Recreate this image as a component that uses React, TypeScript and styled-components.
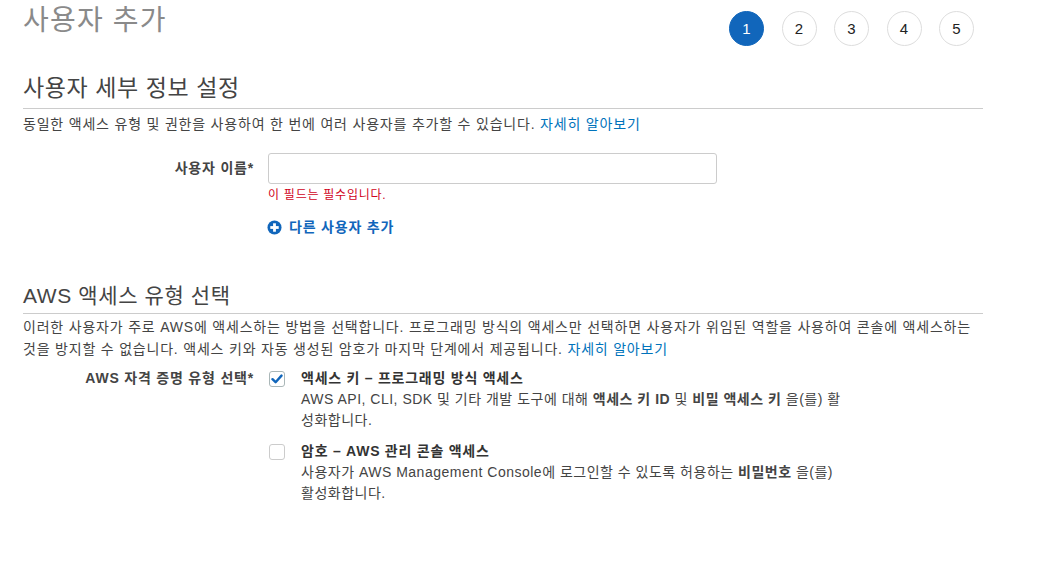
import { Fragment } from "react";
import styled, { createGlobalStyle } from "styled-components";

const GlobalStyle = createGlobalStyle`
  html, body {
    margin: 0;
    padding: 0;
    background: #fff;
  }
  body {
    font-family: "Liberation Sans", "Noto Sans CJK KR", Arial, sans-serif;
    font-size: 14px;
    color: #444;
  }
`;

// styled components
const Page = styled.div`
  width: 960px;
  margin-left: 23px;
`;

const Header = styled.header`
  display: flex;
  justify-content: space-between;
  align-items: flex-start;
  height: 58px;
`;

const Title = styled.h1`
  margin: 0;
  font-size: 28px;
  letter-spacing: 1.2px;
  line-height: 42px;
  font-weight: 400;
  color: #8a8a8a;
`;

const Steps = styled.ol`
  display: flex;
  gap: 17.5px;
  list-style: none;
  margin: 11px 9px 0 0;
  padding: 0;
`;

const Step = styled.li<{ $active?: boolean }>`
  width: 35px;
  height: 35px;
  box-sizing: border-box;
  border-radius: 50%;
  display: flex;
  align-items: center;
  justify-content: center;
  font-size: 15px;
  color: ${(p) => (p.$active ? "#fff" : "#222")};
  background: ${(p) => (p.$active ? "#1166bb" : "#fff")};
  border: 1px solid ${(p) => (p.$active ? "#1166bb" : "#ddd")};
`;

const SectionTitle = styled.h2<{ $size: number; $lh: number; $pb: number }>`
  margin: 0;
  font-size: ${(p) => p.$size}px;
  line-height: ${(p) => p.$lh}px;
  padding-bottom: ${(p) => p.$pb}px;
  letter-spacing: 0.6px;
  font-weight: 400;
  color: #444;
  border-bottom: 1px solid #ccc;
`;

const Section = styled.section<{ $mt: number }>`
  margin-top: ${(p) => p.$mt}px;
`;

const Description = styled.p<{ $lh: number; $mt: number }>`
  margin: ${(p) => p.$mt}px 0 0;
  line-height: ${(p) => p.$lh}px;
  letter-spacing: 0.8px;
  white-space: nowrap;
`;

const Link = styled.a`
  color: #0073bb;
  text-decoration: none;
`;

const FormGrid = styled.div<{ $mt: number }>`
  display: grid;
  grid-template-columns: 231px 1fr;
  column-gap: 14px;
  margin-top: ${(p) => p.$mt}px;
`;

const Label = styled.label<{ $pt: number }>`
  text-align: right;
  font-weight: 700;
  line-height: 21px;
  letter-spacing: 0.8px;
  padding-top: ${(p) => p.$pt}px;
  color: #444;
  white-space: nowrap;
`;

const Field = styled.div`
  display: flex;
  flex-direction: column;
  align-items: flex-start;
`;

const TextInput = styled.input`
  width: 449px;
  height: 31px;
  box-sizing: border-box;
  border: 1px solid #ccc;
  border-radius: 3px;
  padding: 0 8px;
  font: inherit;
  outline: none;
`;

const ErrorText = styled.div`
  margin-top: 3px;
  font-size: 12px;
  line-height: 16px;
  letter-spacing: 0.75px;
  color: #d0021b;
`;

const AddButton = styled.button`
  display: flex;
  align-items: center;
  gap: 7px;
  margin-top: 14px;
  margin-left: -1px;
  padding: 0;
  border: 0;
  background: none;
  font: inherit;
  line-height: 20px;
  letter-spacing: 0.8px;
  font-weight: 700;
  color: #1166bb;
  cursor: pointer;
`;

const OptionList = styled.div`
  display: flex;
  flex-direction: column;
  gap: 10px;
`;

const Option = styled.label`
  display: flex;
  align-items: flex-start;
  gap: 16px;
`;

const CheckBox = styled.span<{ $checked?: boolean }>`
  flex: none;
  width: 16px;
  height: 16px;
  box-sizing: border-box;
  margin: 3px 0 0 1px;
  border: 1px solid ${(p) => (p.$checked ? "#aab7b8" : "#ccc")};
  border-radius: 3px;
  background: #fff;
  display: flex;
  align-items: center;
  justify-content: center;
`;

const OptionBody = styled.div`
  line-height: 21px;
  letter-spacing: 0.5px;
  white-space: nowrap;
`;

const OptionTitle = styled.div`
  font-weight: 700;
  letter-spacing: 0.75px;
  color: #333;
`;

const PlusIcon = () => (
  <svg width="15" height="15" viewBox="0 0 16 16">
    <circle cx="8" cy="8" r="7.5" fill="#1166bb" />
    <rect x="3.5" y="6.5" width="9" height="3" fill="#fff" />
    <rect x="6.5" y="3.5" width="3" height="9" fill="#fff" />
  </svg>
);

const CheckIcon = () => (
  <svg width="12" height="10" viewBox="0 0 12 10">
    <path d="M1.5 5.2 L4.6 8.2 L10.5 1.6" fill="none" stroke="#1166bb" strokeWidth="2.4" strokeLinecap="round" strokeLinejoin="round" />
  </svg>
);

const steps = [1, 2, 3, 4, 5];

export default function App() {
  return (
    <Fragment>
      <GlobalStyle />
      <Page>
        <Header>
          <Title>사용자 추가</Title>
          <Steps>
            {steps.map((n) => (
              <Step key={n} $active={n === 1}>
                {n}
              </Step>
            ))}
          </Steps>
        </Header>

        {/* USER DETAILS */}
        <Section $mt={14}>
          <SectionTitle $size={23} $lh={32} $pb={4}>
            사용자 세부 정보 설정
          </SectionTitle>
          <Description $lh={20} $mt={5}>
            동일한 액세스 유형 및 권한을 사용하여 한 번에 여러 사용자를 추가할 수 있습니다.{" "}
            <Link href="#">자세히 알아보기</Link>
          </Description>

          <FormGrid $mt={19}>
            <Label $pt={5}>사용자 이름*</Label>
            <Field>
              <TextInput type="text" />
              <ErrorText>이 필드는 필수입니다.</ErrorText>
              <AddButton type="button">
                <PlusIcon />
                다른 사용자 추가
              </AddButton>
            </Field>
          </FormGrid>
        </Section>

        {/* ACCESS TYPE */}
        <Section $mt={45}>
          <SectionTitle $size={21} $lh={28} $pb={3}>
            AWS 액세스 유형 선택
          </SectionTitle>
          <Description $lh={22} $mt={2}>
            이러한 사용자가 주로 AWS에 액세스하는 방법을 선택합니다. 프로그래밍 방식의 액세스만 선택하면 사용자가 위임된 역할을 사용하여 콘솔에 액세스하는
            <br />
            것을 방지할 수 없습니다. 액세스 키와 자동 생성된 암호가 마지막 단계에서 제공됩니다. <Link href="#">자세히 알아보기</Link>
          </Description>

          <FormGrid $mt={8}>
            <Label $pt={0}>AWS 자격 증명 유형 선택*</Label>
            <OptionList>
              <Option>
                <CheckBox $checked>
                  <CheckIcon />
                </CheckBox>
                <OptionBody>
                  <OptionTitle>액세스 키 – 프로그래밍 방식 액세스</OptionTitle>
                  AWS API, CLI, SDK 및 기타 개발 도구에 대해 <b>액세스 키 ID</b> 및 <b>비밀 액세스 키</b> 을(를) 활
                  <br />
                  성화합니다.
                </OptionBody>
              </Option>
              <Option>
                <CheckBox />
                <OptionBody>
                  <OptionTitle>암호 – AWS 관리 콘솔 액세스</OptionTitle>
                  사용자가 AWS Management Console에 로그인할 수 있도록 허용하는 <b>비밀번호</b> 을(를)
                  <br />
                  활성화합니다.
                </OptionBody>
              </Option>
            </OptionList>
          </FormGrid>
        </Section>
      </Page>
    </Fragment>
  );
}
